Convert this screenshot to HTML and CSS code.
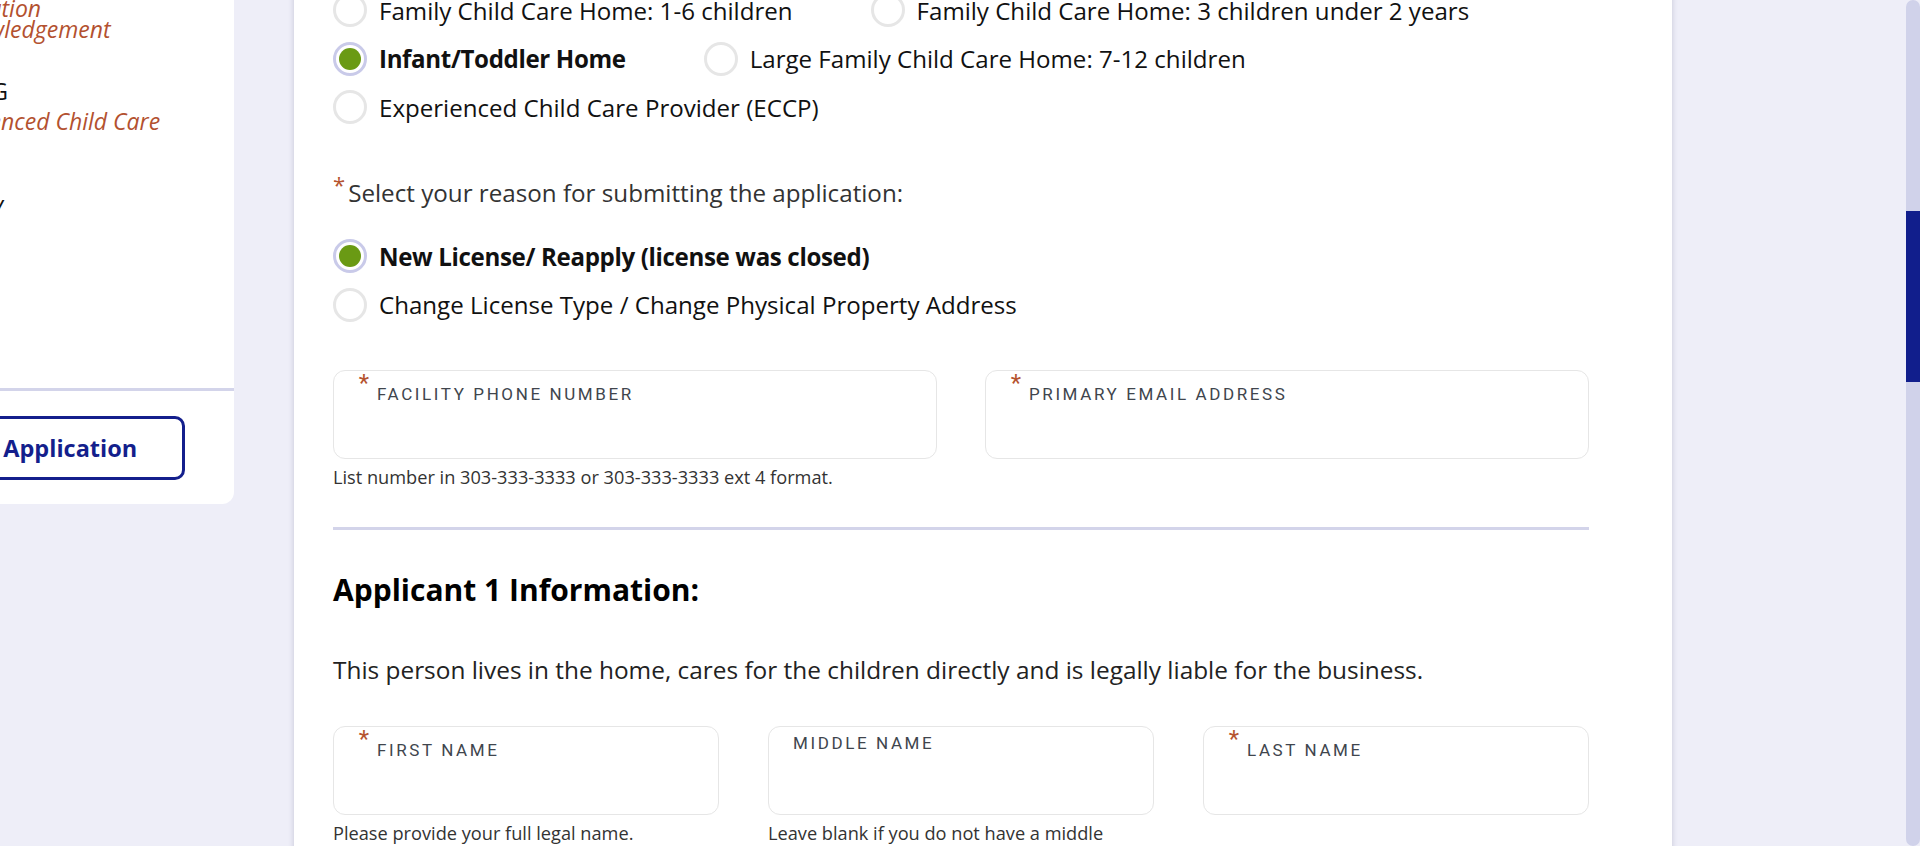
FILE: index.html
```html
<!DOCTYPE html>
<html lang="en">
<head>
<meta charset="utf-8">
<title>Family Child Care Home Application</title>
<link rel="stylesheet" href="styles.css">
</head>
<body>
<div class="screen">
  <div class="viewport">
    <div class="layout">
      <aside class="sidebar">
        <div class="steps">
          <div class="step">
            <div class="step-title">INTRODUCTION</div>
            <div class="step-sub">Application Acknowledgement</div>
          </div>
          <div class="step">
            <div class="step-title">LICENSING</div>
            <div class="step-sub">Experienced Child Care Home</div>
          </div>
          <div class="step step--last">
            <div class="step-title">SUMMARY</div>
          </div>
        </div>
        <div class="sidebar-foot">
          <button class="btn-outline" type="button">Save Application</button>
        </div>
      </aside>

      <main class="card">
        <div class="question">
          <p class="q-label"><span class="req">*</span>Select the license type you are applying for:</p>
          <div class="radios">
            <label class="radio"><span class="dot"></span>Family Child Care Home: 1-6 children</label>
            <label class="radio"><span class="dot"></span>Family Child Care Home: 3 children under 2 years</label>
            <label class="radio checked"><span class="dot"></span>Infant/Toddler Home</label>
            <label class="radio"><span class="dot"></span>Large Family Child Care Home: 7-12 children</label>
            <label class="radio"><span class="dot"></span>Experienced Child Care Provider (ECCP)</label>
          </div>
        </div>

        <div class="question question--next">
          <p class="q-label"><span class="req">*</span>Select your reason for submitting the application:</p>
          <div class="radios radios--stack">
            <label class="radio checked"><span class="dot"></span>New License/ Reapply (license was closed)</label>
            <label class="radio"><span class="dot"></span>Change License Type / Change Physical Property Address</label>
          </div>
        </div>

        <div class="fields fields--two">
          <div class="field">
            <div class="box"><div class="label label--req"><span class="req">*</span>Facility Phone Number</div></div>
            <p class="help">List number in 303-333-3333 or 303-333-3333 ext 4 format.</p>
          </div>
          <div class="field">
            <div class="box"><div class="label label--req"><span class="req">*</span>Primary Email Address</div></div>
          </div>
        </div>

        <hr class="divider">

        <h2 class="section-title">Applicant 1 Information:</h2>
        <p class="intro">This person lives in the home, cares for the children directly and is legally liable for the business.</p>

        <div class="fields fields--three">
          <div class="field">
            <div class="box"><div class="label label--req"><span class="req">*</span>First Name</div></div>
            <p class="help">Please provide your full legal name.</p>
          </div>
          <div class="field">
            <div class="box"><div class="label">Middle Name</div></div>
            <p class="help">Leave blank if you do not have a middle name.</p>
          </div>
          <div class="field">
            <div class="box"><div class="label label--req"><span class="req">*</span>Last Name</div></div>
          </div>
        </div>
      </main>
    </div>
  </div>
  <div class="scrollbar"><div class="thumb"></div></div>
</div>
</body>
</html>
```

FILE: styles.css
```css
html, body {
  margin: 0;
  padding: 0;
}

body {
  background: #eeeef8;
  font-family: "Open Sans", "Noto Sans", sans-serif;
  color: #111;
  overflow: hidden;
}

.screen {
  display: flex;
  height: 846px;
}

.viewport {
  flex: 1;
  overflow: hidden;
}

.layout {
  display: flex;
  align-items: flex-start;
  gap: 60px;
  margin: -100px 0 0 -150px;
}

/* ---------- sidebar ---------- */
.sidebar {
  flex: 0 0 384px;
  background: #fff;
  border-radius: 12px;
}

.steps {
  padding: 61px 49px 163px 42px;
}

.step + .step {
  margin-top: 34px;
}

.step--last {
  padding-top: 4px;
}

.step-title {
  font-size: 23px;
  line-height: 34px;
  color: #111;
  white-space: nowrap;
}

.step-sub {
  margin: 3px 0 0 35px;
  font-size: 23px;
  line-height: 21px;
  font-style: italic;
  color: #b3512f;
}

.sidebar-foot {
  border-top: 3px solid #d3d4ea;
  padding: 25px 49px 24px 45px;
}

.btn-outline {
  display: block;
  width: 100%;
  height: 64px;
  background: #fff;
  border: 3px solid #141f8c;
  border-radius: 10px;
  color: #141f8c;
  font-family: "Open Sans", sans-serif;
  font-size: 23.5px;
  font-weight: 700;
  white-space: nowrap;
}

/* ---------- main card ---------- */
.card {
  flex: 0 0 1378px;
  box-sizing: border-box;
  background: #fff;
  box-shadow: 0 0 6px rgba(40, 40, 90, 0.2);
  padding: 29px 83px 80px 39px;
}

.question--next {
  margin-top: 51px;
}

.q-label {
  margin: 0 0 28px;
  font-size: 24.2px;
  line-height: 36px;
  color: #333;
}

.req {
  position: relative;
  top: -9px;
  color: #b5532f;
  font-size: 22px;
  margin-right: 3px;
}

.radios {
  display: flex;
  flex-wrap: wrap;
  column-gap: 78px;
  row-gap: 14.5px;
}

.radios--stack {
  flex-direction: column;
}

.radio {
  display: flex;
  align-items: center;
  gap: 12px;
  height: 34px;
  font-size: 24.1px;
  color: #111;
  white-space: nowrap;
}

.dot {
  display: grid;
  place-items: center;
  flex: 0 0 34px;
  width: 34px;
  height: 34px;
  box-sizing: border-box;
  border: 3px solid #e6e6e6;
  border-radius: 50%;
  background: #fff;
}

.radio.checked {
  font-weight: 700;
  letter-spacing: -0.35px;
}

.radio.checked .dot {
  border-color: #c9cae9;
}

.radio.checked .dot::after {
  content: "";
  width: 22px;
  height: 22px;
  border-radius: 50%;
  background: #6a9a14;
}

/* ---------- fields ---------- */
.fields {
  display: grid;
  margin-top: 48px;
}

.fields--two {
  grid-template-columns: repeat(2, 1fr);
  column-gap: 48px;
}

.fields--three {
  grid-template-columns: repeat(3, 1fr);
  column-gap: 49px;
  margin-top: 38px;
}

.box {
  height: 89px;
  box-sizing: border-box;
  border: 1px solid #e6e6e6;
  border-radius: 12px;
}

.label {
  padding: 6px 24px 0;
  font-family: Roboto, "Open Sans", sans-serif;
  font-size: 17px;
  line-height: 20px;
  letter-spacing: 2.6px;
  text-transform: uppercase;
  color: #40454d;
  white-space: nowrap;
}

.label--req {
  padding-top: 11px;
}

.label .req {
  display: inline-block;
  width: 12px;
  margin-right: 7px;
  font-size: 24px;
  text-align: center;
  letter-spacing: 0;
}

.help {
  margin: 8px 0 0;
  font-size: 18.2px;
  line-height: 20px;
  color: #333;
}

.divider {
  margin: 40px 0 0;
  height: 3px;
  border: 0;
  background: #d3d4ea;
}

.section-title {
  margin: 40px 0 0;
  font-size: 30px;
  line-height: 40px;
  font-weight: 700;
  color: #000;
}

.intro {
  margin: 42px 0 0;
  font-size: 24.4px;
  line-height: 36px;
  color: #222;
}

/* ---------- scrollbar ---------- */
.scrollbar {
  flex: 0 0 14px;
  height: 846px;
  background: #d0d2ea;
  border-radius: 7px;
  overflow: hidden;
}

.thumb {
  margin-top: 211px;
  height: 171px;
  background: #111e8c;
}
```
